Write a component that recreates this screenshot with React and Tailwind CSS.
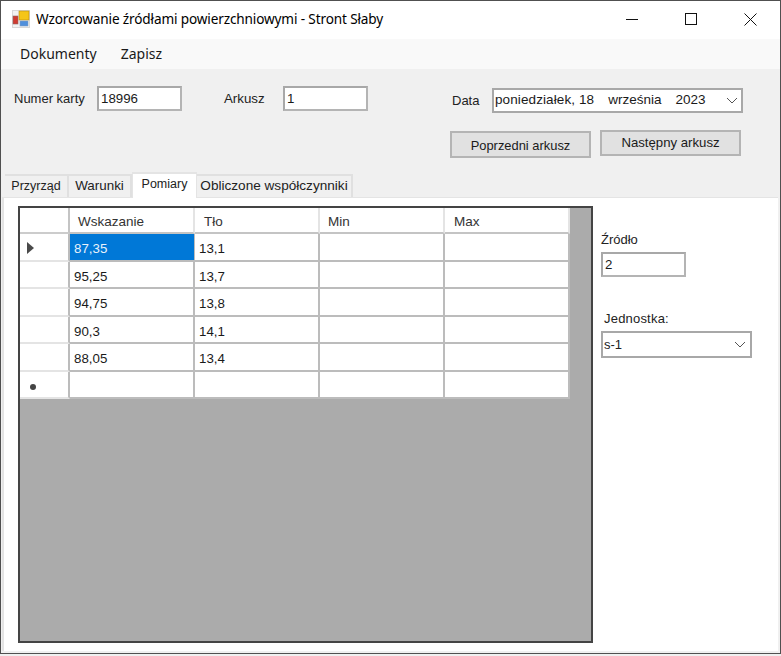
const sans = "font-['Liberation_Sans',sans-serif]";

function Field({ value, w }) {
  return (
    <div className={`h-[25px] ${w} bg-white border-2 border-[#a8a8a8] border-r-[#b4b4b4] border-b-[#b4b4b4] pl-[2px] text-[13.3px] leading-[21px] text-[#1a1a1a]`}>
      {value}
    </div>
  );
}

function Chevron({ className }) {
  return (
    <svg width="12" height="7" viewBox="0 0 12 7" className={className} fill="none" stroke="#555" strokeWidth="1">
      <path d="M1 1 L6 6 L11 1" />
    </svg>
  );
}

const cols = ["Wskazanie", "Tło", "Min", "Max"];
const headPad = ["pl-[8px]", "pl-[9px]", "pl-[8px]", "pl-[9px]"];
const rows = [
  ["87,35", "13,1"],
  ["95,25", "13,7"],
  ["94,75", "13,8"],
  ["90,3", "14,1"],
  ["88,05", "13,4"],
  ["", ""],
];
const heights = ["h-[28px]", "h-[27px]", "h-[28px]", "h-[27px]", "h-[28px]", "h-[27px]"];

function Grid() {
  return (
    <div className="w-[575px] h-[437px] border-2 border-[#444] bg-[#ababab] shrink-0">
      <div className="w-[550px] bg-white">
        <div className="flex h-[26px] text-[13.5px] leading-[28px] text-[#333]">
          <div className="w-[50px] border-r-2 border-b-2 border-[#e4e4e4] border-b-[#cccccc] border-r-[#c4c4c4]" />
          {cols.map((c, i) => (
            <div key={c} className={`w-[125px] border-r-2 border-b-2 border-r-[#e4e4e4] border-b-[#c4c4c4] ${headPad[i]}`}>{c}</div>
          ))}
        </div>
        {rows.map((r, i) => (
          <div key={i} className={`flex ${heights[i]} text-[13.3px] text-[#1a1a1a]`}>
            <div className="w-[50px] border-r-2 border-b-2 border-[#e4e4e4] border-r-[#bcbcbc] flex items-center pl-[7px]">
              {i === 0 && (
                <svg width="8" height="12" viewBox="0 0 8 12" fill="#4a4a4a" className="mt-[1px]"><path d="M0 0 L7 6 L0 12 Z" /></svg>
              )}
              {i === 5 && <div className="ml-[3px] mt-[5px] w-[6px] h-[6px] rounded-full bg-[#444]" />}
            </div>
            {[0, 1, 2, 3].map((j) => (
              <div
                key={j}
                className={`w-[125px] border-b-2 border-[#bcbcbc] pl-[4px] leading-[29px] ${i === 0 && j === 0 ? "border-r bg-[#0078d7] text-[#e8f2fb]" : "border-r-2"}`}
              >
                {r[j] || ""}
              </div>
            ))}
          </div>
        ))}
      </div>
    </div>
  );
}

function Tab({ children, active, w, size }) {
  return (
    <div
      className={`${w} ${size} text-center text-[#222] whitespace-nowrap ${
        active
          ? "h-[26px] bg-white border-t-2 border-x border-[#e4e4e4] leading-[20px] z-10"
          : "h-[23px] mt-[2px] bg-[#f0f0f0] border-t-2 border-r-2 border-[#e0e0e0] leading-[20px]"
      }`}
    >
      {children}
    </div>
  );
}

export default function App() {
  return (
    <div className={`w-[781px] h-[656px] bg-[#f0f0f0] ${sans} overflow-hidden`}>
      <div className="h-[654px] border border-[#505050] flex flex-col">
        {/* Title bar */}
        <div className="h-[38px] shrink-0 bg-white flex items-center pl-[11px]">
          <svg width="18" height="18" viewBox="0 0 18 18" className="mt-[-2px] shrink-0">
            <rect x="0" y="0" width="18" height="18" fill="#d8d8d8" />
            <rect x="1" y="1" width="16" height="16" fill="#f2f2f2" />
            <rect x="7" y="1" width="10" height="9" fill="#f5c518" stroke="#b98a10" strokeWidth="0.6" />
            <rect x="1" y="6" width="5" height="8" fill="#d03a30" stroke="#8d6a66" strokeWidth="0.6" />
            <rect x="8" y="11" width="8" height="5" fill="#4f8fdc" stroke="#7d9cc4" strokeWidth="0.6" />
          </svg>
          <span className="ml-[6px] mt-[-2px] font-['Noto_Sans',sans-serif] text-[13.6px] text-black whitespace-nowrap tracking-[-0.14px]">
            Wzorcowanie źródłami powierzchniowymi - Stront Słaby
          </span>
          <div className="ml-auto flex items-center h-full text-black">
            <svg width="13" height="13" viewBox="0 0 13 13" className="mr-[46px] mt-[-1px]" stroke="#111" fill="none"><path d="M0 6.5 H12" /></svg>
            <svg width="13" height="13" viewBox="0 0 13 13" className="mr-[46px] mt-[-1px]" stroke="#111" fill="none"><rect x="0.5" y="0.5" width="11" height="11" /></svg>
            <svg width="13" height="13" viewBox="0 0 13 13" className="mr-[23px] mt-[-1px]" stroke="#111" fill="none"><path d="M0.5 0.5 L12.5 12.5 M12.5 0.5 L0.5 12.5" /></svg>
          </div>
        </div>

        {/* Menu */}
        <div className="h-[30px] shrink-0 bg-[#f9f9f9] flex items-center pl-[19px] pb-[2px] gap-[24px] font-['Noto_Sans',sans-serif] text-[14px] text-[#1a1a1a]">
          <span>Dokumenty</span>
          <span>Zapisz</span>
        </div>

        {/* Form head */}
        <div className="h-[103px] shrink-0 flex flex-col text-[13px] text-[#222]">
          <div className="flex items-start pt-[17px] pl-[13px]">
            <span className="leading-[25px] w-[83px]">Numer karty</span>
            <Field value="18996" w="w-[85px]" />
            <span className="ml-[42px] w-[59px] leading-[25px] text-[13.3px]">Arkusz</span>
            <Field value="1" w="w-[85px]" />
            <span className="ml-[84px] w-[40px] mt-[2px] leading-[25px]">Data</span>
            <div className="w-[251px] h-[25px] mt-[2px] bg-white border-2 border-[#a8a8a8] flex items-center pl-[1px] pr-[3px] whitespace-nowrap text-[#1a1a1a] text-[13.5px]">
              <span className="tracking-[0.1px]">poniedziałek, 18</span>
              <span className="ml-[14px]">września</span>
              <span className="ml-[14px]">2023</span>
              <Chevron className="ml-auto" />
            </div>
          </div>
          <div className="flex items-start mt-[17px] pl-[449px]">
            <div className="w-[141px] h-[27px] mt-[1px] bg-[#e1e1e1] border-2 border-[#b4b4b4] text-center leading-[25px] text-[#1a1a1a] text-[12.9px]">Poprzedni arkusz</div>
            <div className="w-[141px] h-[26px] ml-[9px] bg-[#e1e1e1] border-2 border-[#b4b4b4] text-center leading-[22px] text-[#1a1a1a] text-[13.2px]">Następny arkusz</div>
          </div>
        </div>

        {/* Tabs */}
        <div className="flex items-start h-[25px] shrink-0 pl-[4px]">
          <Tab w="w-[64px]" size="text-[12.5px]">Przyrząd</Tab>
          <Tab w="w-[63px]" size="text-[13.4px]">Warunki</Tab>
          <Tab active w="w-[65px]" size="text-[12.5px]">Pomiary</Tab>
          <Tab w="w-[156px]" size="text-[13.6px]">Obliczone współczynniki</Tab>
        </div>

        {/* Tab page */}
        <div className="flex-1 mr-[2px] ml-[1px] mb-[2px] bg-white border-t border-l-2 border-[#e4e4e4] flex pt-[8px] pl-[14px]">
          <Grid />
          <div className="ml-[8px] text-[13px] text-[#222]">
            <div className="mt-[26px] leading-[16px]">Źródło</div>
            <div className="mt-[4px]"><Field value="2" w="w-[85px]" /></div>
            <div className="mt-[34px] ml-[3px] leading-[16px] tracking-[0.2px]">Jednostka:</div>
            <div className="mt-[4px] w-[151px] h-[27px] border-2 border-[#a8a8a8] bg-white flex items-center pl-[1px] pr-[4px]">
              <span>s-1</span>
              <Chevron className="ml-auto" />
            </div>
          </div>
        </div>
      </div>
    </div>
  );
}
